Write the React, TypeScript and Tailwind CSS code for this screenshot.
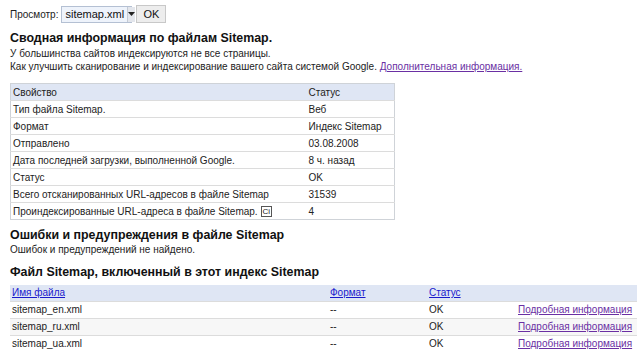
import React from 'react';

const summaryRows = [
  ['Тип файла Sitemap.', 'Веб'],
  ['Формат', 'Индекс Sitemap'],
  ['Отправлено', '03.08.2008'],
  ['Дата последней загрузки, выполненной Google.', '8 ч. назад'],
  ['Статус', 'OK'],
  ['Всего отсканированных URL-адресов в файле Sitemap', '31539'],
  ['Проиндексированные URL-адреса в файле Sitemap.', '4'],
];

const files = ['sitemap_en.xml', 'sitemap_ru.xml', 'sitemap_ua.xml'];

export default function App() {
  return (
    <div className="w-[640px] h-[354px] overflow-hidden bg-white px-[10px] pt-[5px] text-[10px] leading-[13px] text-[#222] font-['Liberation_Sans',Arial,sans-serif]">
      {/* View selector */}
      <div className="flex items-center h-[18px]">
        <span className="mr-[3px]">Просмотр:</span>
        <div className="flex items-center h-[17px] w-[71px] border border-[#b4c0d3] bg-[#eef3fb]">
          <span className="flex-1 px-[3px] text-[11px] text-[#111]">sitemap.xml</span>
          <span className="flex items-center justify-center w-[13px] h-[15px] bg-[#e3e6ec] border-l border-[#c4cad4]">
            <svg width="7" height="4" viewBox="0 0 7 4">
              <path d="M0 0h7L3.5 4z" fill="#222" />
            </svg>
          </span>
        </div>
        <button className="ml-[4px] h-[18px] w-[30px] border border-[#c8c8c8] bg-[#ededed] text-[11px] text-[#111]">OK</button>
      </div>

      {/* Summary */}
      <h2 className="mt-[8px] text-[12.4px] leading-[15px] font-bold text-[#111]">Сводная информация по файлам Sitemap.</h2>
      <p className="mt-[1px]">У большинства сайтов индексируются не все страницы.</p>
      <p>
        Как улучшить сканирование и индексирование вашего сайта системой Google.{' '}
        <a className="text-[#6a2fa3] underline">Дополнительная информация.</a>
      </p>

      <table className="mt-[10px] w-[385px] border-collapse border border-[#cfd3d8]">
        <thead>
          <tr className="bg-[#dfe6f4] h-[17px]">
            <th className="text-left font-normal pl-[2px] w-[296px]">Свойство</th>
            <th className="text-left font-normal pl-[2px]">Статус</th>
          </tr>
        </thead>
        <tbody>
          {summaryRows.map(([k, v], i) => (
            <tr key={k} className="h-[17px] border-t border-[#dcdcdc]">
              <td className="pl-[2px] whitespace-nowrap">
                {k}
                {i === summaryRows.length - 1 && (
                  <span className="ml-[3px] inline-flex items-center justify-center w-[11px] h-[11px] border border-[#555] text-[8px] leading-[8px] align-middle">Ci</span>
                )}
              </td>
              <td className="pl-[2px] whitespace-nowrap">{v}</td>
            </tr>
          ))}
        </tbody>
      </table>

      {/* Errors */}
      <h2 className="mt-[8px] text-[12.4px] leading-[15px] font-bold text-[#111]">Ошибки и предупреждения в файле Sitemap</h2>
      <p>Ошибок и предупреждений не найдено.</p>

      {/* Included sitemaps */}
      <h2 className="mt-[9px] text-[12.4px] leading-[15px] font-bold text-[#111]">Файл Sitemap, включенный в этот индекс Sitemap</h2>
      <table className="mt-[5px] w-[627px] border-collapse">
        <thead>
          <tr className="bg-[#dfe6f4] h-[16px]">
            <th className="text-left font-normal pl-[2px] w-[320px]">
              <a className="text-[#1a1acc] underline">Имя файла</a>
            </th>
            <th className="text-left font-normal w-[99px]">
              <a className="text-[#1a1acc] underline">Формат</a>
            </th>
            <th className="text-left font-normal w-[89px]">
              <a className="text-[#1a1acc] underline">Статус</a>
            </th>
            <th />
          </tr>
        </thead>
        <tbody>
          {files.map((f, i) => (
            <tr key={f} className={`h-[17px] border-t border-[#dcdcdc] ${i === 1 ? 'bg-[#f7f7f7]' : 'bg-white'}`}>
              <td className="pl-[2px]">{f}</td>
              <td>--</td>
              <td>OK</td>
              <td className="whitespace-nowrap">
                <a className="text-[#6a2fa3] underline">Подробная информация</a>
              </td>
            </tr>
          ))}
        </tbody>
      </table>
    </div>
  );
}
